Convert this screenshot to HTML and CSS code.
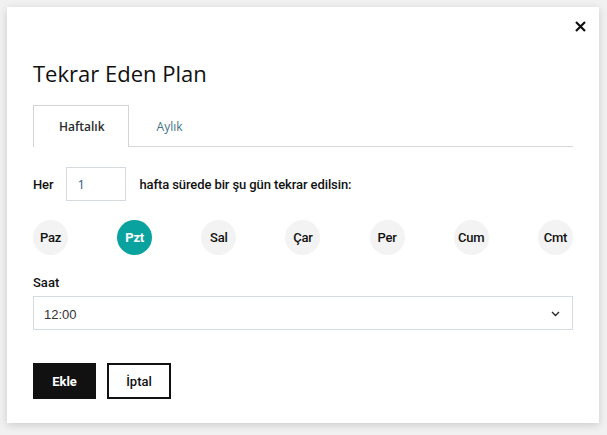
FILE: index.html
```html
<!DOCTYPE html>
<html lang="tr">
<head>
<meta charset="utf-8">
<title>Tekrar Eden Plan</title>
<link rel="stylesheet" href="styles.css">
</head>
<body>
<div class="backdrop">
  <div class="modal">
    <div class="modal-head">
      <button class="close" aria-label="Kapat">
        <svg width="11" height="11" viewBox="0 0 11 11"><path d="M1 1L10 10M10 1L1 10" stroke="#111" stroke-width="2.2" fill="none"/></svg>
      </button>
    </div>
    <h1 class="title">Tekrar Eden Plan</h1>
    <div class="tabs">
      <div class="tab active">Haftalık</div>
      <div class="tab">Aylık</div>
    </div>
    <div class="every-row">
      <span class="label">Her</span>
      <input class="num-input" type="text" value="1">
      <span class="label">hafta sürede bir şu gün tekrar edilsin:</span>
    </div>
    <div class="days">
      <span class="day">Paz</span>
      <span class="day selected">Pzt</span>
      <span class="day">Sal</span>
      <span class="day">Çar</span>
      <span class="day">Per</span>
      <span class="day">Cum</span>
      <span class="day">Cmt</span>
    </div>
    <div class="field-label">Saat</div>
    <div class="select">
      <span class="select-value">12:00</span>
      <svg width="9" height="6" viewBox="0 0 9 6"><path d="M1 1L4.5 4.5L8 1" stroke="#222" stroke-width="1.3" fill="none"/></svg>
    </div>
    <div class="actions">
      <button class="btn btn-primary">Ekle</button>
      <button class="btn btn-outline">İptal</button>
    </div>
  </div>
</div>
</body>
</html>
```

FILE: styles.css
```css
* { box-sizing: border-box; }
html, body { margin: 0; padding: 0; }
body {
  background: #f1f1f1;
  width: 607px;
  height: 435px;
  overflow: hidden;
  font-family: Roboto, "Liberation Sans", sans-serif;
  color: #111;
}
.backdrop {
  padding: 7px 8px 12px 7px;
}
.modal {
  width: 592px;
  height: 416px;
  background: #fff;
  box-shadow: 0 2px 8px rgba(0,0,0,0.16);
  padding: 9px 26px 24px 26px;
  display: flex;
  flex-direction: column;
}
.modal-head {
  display: flex;
  justify-content: flex-end;
  height: 20px;
  margin-right: -17px;
}
.close {
  width: 20px;
  height: 20px;
  border: 0;
  background: none;
  padding: 0;
  display: flex;
  align-items: center;
  justify-content: center;
  cursor: pointer;
}
.title {
  margin: 22px 0 0 0;
  font-family: "Open Sans", sans-serif;
  font-weight: 400;
  font-size: 22px;
  line-height: 30px;
  color: #111;
  letter-spacing: 0;
}
.tabs {
  margin-top: 17px;
  display: flex;
  border-bottom: 1px solid #d9d9d9;
  height: 42px;
}
.tab {
  font-family: "Open Sans", sans-serif;
  font-size: 12px;
  padding: 0 26px 0 27px;
  height: 42px;
  line-height: 41px;
  color: #3f7282;
  border: 1px solid transparent;
  border-bottom: 0;
}
.tab.active {
  color: #2b2b2b;
  font-weight: 600;
  background: #fff;
  border-color: #d4d4d4;
  height: 42px;
  margin-bottom: -1px;
  padding: 0 23px 0 25px;
}
.every-row {
  margin-top: 20px;
  display: flex;
  align-items: center;
  gap: 13px;
  height: 34px;
}
.label {
  font-size: 13px;
  font-weight: 500;
  color: #111;
  letter-spacing: -0.1px;
}
.num-input {
  width: 60px;
  height: 34px;
  border: 1px solid #d6dbdf;
  padding: 0 10px;
  font-family: "Open Sans", sans-serif;
  font-size: 13px;
  color: #2a5d8c;
  outline: none;
}
.days {
  margin-top: 19px;
  display: flex;
  justify-content: space-between;
}
.day {
  width: 35px;
  height: 35px;
  border-radius: 50%;
  background: #f3f3f3;
  display: flex;
  align-items: center;
  justify-content: center;
  font-size: 13px;
  font-weight: 500;
  color: #111;
  letter-spacing: -0.2px;
}
.day.selected {
  background: #0aa29f;
  color: #fff;
  font-weight: 700;
}
.field-label {
  margin-top: 19px;
  font-size: 13px;
  font-weight: 500;
  line-height: 18px;
  color: #111;
}
.select {
  margin-top: 4px;
  height: 34px;
  border: 1px solid #d6dbdf;
  display: flex;
  align-items: center;
  justify-content: space-between;
  padding: 2px 12px 0 10px;
}
.select-value {
  font-family: "Liberation Sans", sans-serif;
  font-size: 13px;
  color: #333;
}
.actions {
  margin-top: 33px;
  display: flex;
  gap: 11px;
}
.btn {
  height: 36px;
  font-family: Roboto, sans-serif;
  font-size: 13px;
  font-weight: 700;
  cursor: pointer;
}
.btn-primary {
  width: 63px;
  background: #111;
  color: #fff;
  border: 0;
}
.btn-outline {
  width: 64px;
  background: #fff;
  color: #111;
  border: 2px solid #111;
  font-weight: 500;
}
```
